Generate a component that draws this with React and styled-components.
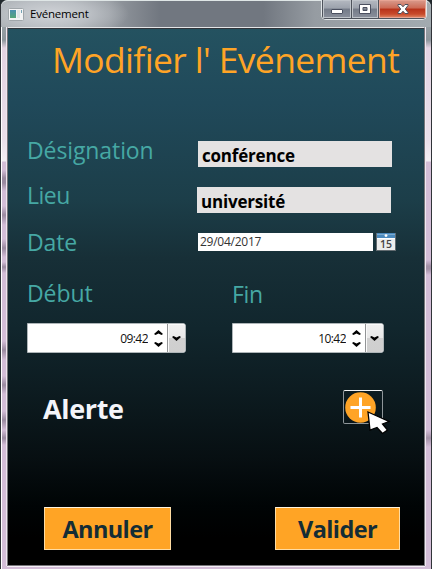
import React from 'react';
import styled, { createGlobalStyle } from 'styled-components';

const Global = createGlobalStyle`
  * { box-sizing: border-box; }
  body { margin: 0; background: #20282c; overflow: hidden; }
  button, input { font-family: inherit; border-radius: 0; }
`;

const Window = styled.main`
  width: 432px;
  height: 569px;
  display: flex;
  flex-direction: column;
  padding: 0 6px 0 7px;
  border: solid #303338;
  border-width: 0 1px 0 1px;
  border-radius: 7px 7px 0 0;
  font-family: 'Open Sans', 'Noto Sans', sans-serif;
  background:
    linear-gradient(#fff, #fff) 0 0 / 1px 100% no-repeat,
    linear-gradient(transparent 260px, #a391a7 266px, #a391a7 269px, transparent 275px,
      transparent 430px, #a391a7 438px, transparent 447px) right / 6px 100% no-repeat,
    linear-gradient(transparent 170px, #9a8aa0 178px, #9a8aa0 183px, transparent 191px,
      transparent 206px, #9a8aa0 215px, transparent 225px, transparent 239px,
      #9a8aa0 248px, transparent 257px, transparent 262px, #9a8aa0 267px,
      transparent 273px, transparent 341px, #9a8aa0 350px, transparent 360px,
      transparent 376px, #9a8aa0 385px, transparent 394px,
      transparent 411px, #9a8aa0 420px, transparent 430px, #9a8aa0 438px, transparent 445px)
      left / 7px 100% no-repeat,
    linear-gradient(#a9b1b4 0, #8d969c 40px, #e3d3e2 48px, #eadfea 140px,
      #f2eef3 161px, #d3bdd7 162px, #d3bdd7 100%);
`;

const TitleBar = styled.header`
  height: 27px;
  flex: none;
  display: flex;
  align-items: flex-start;
  margin: 0 -6px 0 -7px;
  padding-left: 7px;
  border-top: 1px solid #dfe6e6;
  border-radius: 7px 7px 0 0;
  background:
    radial-gradient(ellipse 78px 26px at 50px 13px, #d0d3d7 0, #c3c7cccc 50%, #c3c7cc00 100%),
    linear-gradient(90deg, #a4aaae 0, #969ba1 25%, #717780 37%, #717780 61%, #969ca2 73%, #a3abb0 100%);
`;

const AppIcon = styled.svg`
  margin-top: 7px;
  flex: none;
`;

const Caption = styled.span`
  flex: 1;
  margin: 5px 0 0 6px;
  font: 11.5px/16px 'Open Sans', sans-serif;
  letter-spacing: -0.2px;
  color: #000;
`;

const WindowControls = styled.div`
  display: flex;
  height: 20px;
  margin: -1px 4px 0 0;
  border: 1px solid #e2e6e9;
  border-top: 0;
  border-radius: 0 0 5px 5px;
  overflow: hidden;
  box-shadow: inset 0 0 0 1px #555b64;
`;

const Control = styled.button`
  width: ${(p) => p.$width}px;
  padding: 0;
  display: grid;
  place-items: center;
  border: solid #4e535c;
  border-width: 0 0 1px 1px;
  box-shadow: inset 0 0 0 1px ${(p) => (p.$close ? '#e7a494' : '#bfc4ca')};
  background: ${(p) =>
    p.$close
      ? 'linear-gradient(#d99c8e 0, #cc6a55 45%, #b7321a 50%, #c84a2b 78%, #e08c68 100%)'
      : 'linear-gradient(#b4b9c1 0, #9ca2ac 45%, #747b88 50%, #8a909c 100%)'};
`;

const Client = styled.section`
  width: 418px;
  height: 539px;
  flex: none;
  margin-left: -1px;
  padding: 0 0 0 19px;
  border: 1px solid #c8c8cc;
  border-color: #e4e5e7 #77757a #77757a #77757a;
  box-shadow: inset 0 1px 0 #30343a, 0 1px 0 #f5eef6, 1px 0 0 #f0e9f1, -1px 0 0 #eee6ef;
  background: linear-gradient(#245260 0, #20495a 14%, #1c3e49 32%, #172f37 43%,
    #11262d 56%, #0d1c21 67%, #070f12 80%, #000405 89%, #000 95%);
`;

const Heading = styled.h1`
  margin: 0;
  height: 113px;
  padding: 7px 0 0 25px;
  font-size: 35.5px;
  font-weight: 400;
  line-height: 48px;
  letter-spacing: -0.65px;
  white-space: nowrap;
  color: #ffa426;
`;

const FieldRow = styled.div`
  display: flex;
  align-items: flex-start;
  height: 46px;
`;

const Label = styled.label`
  display: block;
  flex: none;
  width: ${(p) => p.$width || 170}px;
  margin-top: ${(p) => p.$top || 0}px;
  font-size: 23px;
  line-height: 32px;
  letter-spacing: ${(p) => p.$track || -0.1}px;
  color: #46a8a4;
`;

const TextInput = styled.input`
  width: 194px;
  height: 26px;
  margin: 0 0 0 ${(p) => p.$shift || 0}px;
  padding: 3px 4px 0;
  border: 0;
  background: #e4e2e2;
  color: #000;
  font-size: 17px;
  font-weight: 700;
  line-height: 22px;
  letter-spacing: -0.2px;
`;

const DateInput = styled.input`
  width: 175px;
  height: 18px;
  margin-right: 3px;
  padding: 0 2px 1px;
  border: 0;
  background: #fff;
  color: #333;
  font-size: 12px;
  letter-spacing: -0.25px;
`;

const TimeRow = styled.div`
  display: flex;
  height: 111px;
`;

const TimeGroup = styled.div`
  flex: none;
  width: ${(p) => p.$width}px;
`;

const Spinner = styled.div`
  display: flex;
  width: ${(p) => p.$width}px;
  height: 30px;
  margin-top: ${(p) => p.$top}px;
  border: 1px solid #aeb5b8;
  border-radius: 0 3px 3px 0;
  background: #fff;
`;

const TimeInput = styled.input`
  flex: 1;
  min-width: 0;
  padding: 0 6px 0 0;
  border: 0;
  background: transparent;
  text-align: right;
  font-size: 12px;
  letter-spacing: -0.55px;
  color: #111;
`;

const Steps = styled.div`
  width: 13px;
  display: flex;
  flex-direction: column;
  justify-content: space-between;
  align-items: flex-start;
  padding: 6px 0 5px;
`;

const DropButton = styled.button`
  width: 18px;
  padding: 0;
  display: grid;
  place-items: center;
  border: 0;
  border-left: 1px solid #929496;
  border-radius: 0 2px 2px 0;
  box-shadow: inset 1px 1px #fafafa;
  background: linear-gradient(#f0f0f0 0, #e8e8e8 49%, #d0d0d0 50%, #cfcfcf 100%);
`;

const AlertRow = styled.div`
  display: flex;
  justify-content: space-between;
  height: 117px;
  padding: 0 41px 0 16px;
`;

const AlertTitle = styled.h2`
  margin: 1px 0 0;
  font-size: 27px;
  font-weight: 700;
  line-height: 36px;
  letter-spacing: -0.35px;
  color: #f4f5fa;
`;

const AddButton = styled.button`
  position: relative;
  width: 40px;
  height: 34px;
  padding: 0 0 0 1px;
  display: flex;
  align-items: center;
  border: 1px solid #8e9599;
  border-top-color: #f2f2f2;
  border-radius: 2px;
  background: transparent;
`;

const Cursor = styled.svg`
  position: absolute;
  left: 23px;
  top: 20px;
`;

const Actions = styled.footer`
  display: flex;
  justify-content: space-between;
  padding: 0 24px 0 17px;
`;

const ActionButton = styled.button`
  width: ${(p) => p.$width}px;
  height: 43px;
  padding: 0;
  border: 1px solid #ffdca2;
  border-top-color: #fff3df;
  background: #ffa425;
  color: #142d35;
  font-size: 23.5px;
  font-weight: 700;
  line-height: 40px;
  letter-spacing: -0.6px;
`;

const Chevron = ({ up }) => (
  <svg width="9" height="5" viewBox="0 0 9 5" fill="#000">
    <path d={up ? 'M0 4 4.5 0 9 4 7.5 5 4.5 3.5 1.5 5Z' : 'M0 1 4.5 5 9 1 7.5 0 4.5 1.5 1.5 0Z'} />
  </svg>
);

const TimeSpinner = ({ value, width, top }) => (
  <Spinner $width={width} $top={top}>
    <TimeInput defaultValue={value} />
    <Steps>
      <Chevron up />
      <Chevron />
    </Steps>
    <DropButton>
      <Chevron />
    </DropButton>
  </Spinner>
);

const CalendarIcon = () => (
  <svg width="20" height="18" viewBox="0 0 20 18">
    <rect x=".5" y=".5" width="19" height="17" fill="#eceded" stroke="#626b70" />
    <rect x="1" y="0" width="18" height="5" fill="#4a89bd" />
    <rect x="1" y="1" width="18" height="1" fill="#79aad0" />
    <circle cx="10" cy="2.6" r="1.4" fill="#fff" />
    <rect x="1" y="5" width="18" height="1" fill="#fff" />
    <text x="10" y="15" textAnchor="middle" fontFamily="Open Sans" fontWeight="600" fontSize="10" fill="#444" textLength="12" lengthAdjust="spacingAndGlyphs">15</text>
  </svg>
);

export default function App() {
  return (
    <>
      <Global />
      <Window>
        <TitleBar>
          <AppIcon width="16" height="13" viewBox="0 0 16 13">
            <defs>
              <linearGradient id="pane" x2="0" y2="1">
                <stop stopColor="#4b8fb0" />
                <stop offset="1" stopColor="#55a678" />
              </linearGradient>
            </defs>
            <rect x=".5" y=".5" width="15" height="12" rx="1" fill="#f3f4f5" stroke="#a0a6aa" />
            <rect x="2" y="2" width="6" height="8" fill="url(#pane)" />
            <rect x="9" y="2" width="3" height="8" fill="#dfe5e8" />
            <rect x="13" y="2" width="1" height="3" fill="#75a3b5" />
          </AppIcon>
          <Caption>Evénement</Caption>
          <WindowControls>
            <Control $width={29}>
              <svg width="12" height="16" viewBox="0 0 12 16">
                <rect x=".5" y="8.500" width="11" height="4" rx=".5" fill="#fff" stroke="#4b5060" />
              </svg>
            </Control>
            <Control $width={27}>
              <svg width="12" height="16" viewBox="0 0 12 16">
                <path d="M.5 3.500h11v9H.5zM4 6.500v3h4v-3z" fill="#fff" fillRule="evenodd" stroke="#4b5060" />
              </svg>
            </Control>
            <Control $width={48} $close>
              <svg width="12" height="16" viewBox="0 0 12 16">
                <path d="M1 3.500h3l2 2.300 2-2.300h3v1L8.300 8l2.700 3.500v1H8l-2-2.300-2 2.300H1v-1L3.700 8 1 4.500z" fill="#fff" stroke="#4b4f5d" />
              </svg>
            </Control>
          </WindowControls>
        </TitleBar>
        <Client>
          <Heading>Modifier l' Evénement</Heading>
          <FieldRow>
            <Label $top={-7}>Désignation</Label>
            <TextInput $shift={1} defaultValue="conférence" />
          </FieldRow>
          <FieldRow>
            <Label $top={-8} $track={-0.5}>Lieu</Label>
            <TextInput defaultValue="université" />
          </FieldRow>
          <FieldRow>
            <Label $width={171} $top={-7}>Date</Label>
            <DateInput defaultValue="29/04/2017" />
            <CalendarIcon />
          </FieldRow>
          <TimeRow>
            <TimeGroup $width={205}>
              <Label $top={-2}>Début</Label>
              <TimeSpinner value="09:42" width={159} top={14} />
            </TimeGroup>
            <TimeGroup $width={152}>
              <Label $top={-1} $track={-0.3}>Fin</Label>
              <TimeSpinner value="10:42" width={152} top={13} />
            </TimeGroup>
          </TimeRow>
          <AlertRow>
            <AlertTitle>Alerte</AlertTitle>
            <AddButton aria-label="+">
              <svg width="31" height="31" viewBox="0 0 31 31">
                <circle cx="15.500" cy="15.500" r="15.300" fill="#ffa426" />
                <path d="M15.500 5.500v20M5.500 15.500h20" stroke="#fff" strokeWidth="3" />
              </svg>
              <Cursor width="24" height="24" viewBox="0 0 24 24">
                <path d="M1 1 22 10.500 15.500 13l5 6-5 3.500-5.500-6L3 19Z" fill="#fff" stroke="#000" strokeWidth="1.300" />
              </Cursor>
            </AddButton>
          </AlertRow>
          <Actions>
            <ActionButton $width={127}>Annuler</ActionButton>
            <ActionButton $width={125}>Valider</ActionButton>
          </Actions>
        </Client>
      </Window>
    </>
  );
}
